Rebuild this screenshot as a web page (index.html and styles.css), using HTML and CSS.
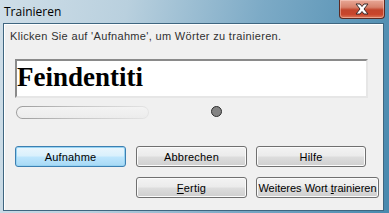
FILE: index.html
```html
<!DOCTYPE html>
<html>
<head>
<meta charset="utf-8">
<link rel="stylesheet" href="styles.css">
</head>
<body>
<div class="window">
  <div class="titlebar">
    <div class="title">Trainieren</div>
    <div class="close">
      <svg width="16" height="12" viewBox="0 0 16 12">
        <path d="M2 1 L6 1 L8 3.5 L10 1 L14 1 L10 6 L14 11 L10 11 L8 8.5 L6 11 L2 11 L6 6 Z" fill="#ffffff" stroke="#3a2a2a" stroke-width="1" stroke-linejoin="round"/>
      </svg>
    </div>
  </div>
  <div class="client">
    <div class="hint">Klicken Sie auf 'Aufnahme', um Wörter zu trainieren.</div>
    <div class="edit">Feindentiti</div>
    <div class="meter-row">
      <div class="progress"><div class="progress-inner"></div></div>
      <div class="dot"></div>
    </div>
    <div class="buttons">
      <button class="btn btn-default">Aufnahme</button>
      <button class="btn btn-mid">Abbrechen</button>
      <button class="btn btn-help">Hilfe</button>
      <button class="btn btn-mid btn-r2c2"><u>F</u>ertig</button>
      <button class="btn btn-wide">Weiteres Wort <u>t</u>rainieren</button>
    </div>
  </div>
</div>
</body>
</html>
```

FILE: styles.css
```css
html, body {
  margin: 0;
  padding: 0;
}
body {
  width: 389px;
  height: 213px;
  overflow: hidden;
  font-family: "Liberation Sans", Arial, sans-serif;
}
.window {
  width: 389px;
  height: 213px;
  box-sizing: border-box;
  display: flex;
  flex-direction: column;
  background: linear-gradient(100deg, #cfdee8 0%, #b9d0de 30%, #7caac6 62%, #4889ae 100%);
}
.titlebar {
  height: 23px;
  display: flex;
  justify-content: space-between;
  align-items: flex-start;
  flex: none;
}
.title {
  padding: 4px 0 0 4px;
  font-family: "Open Sans", "Liberation Sans", sans-serif;
  font-size: 12px;
  line-height: 16px;
  color: #000000;
}
.close {
  width: 46px;
  height: 19px;
  margin-right: 4px;
  box-sizing: border-box;
  border: 1px solid #5b2a22;
  border-top: none;
  border-radius: 0 0 4px 4px;
  background: linear-gradient(#e8a897 0%, #d7826c 40%, #c2452c 55%, #c8452b 80%, #dc7a5a 100%);
  box-shadow: inset 0 0 0 1px rgba(255, 220, 210, 0.45);
  display: flex;
  align-items: center;
  justify-content: center;
}
.client {
  flex: 1;
  margin: 0 5px 2px 3px;
  border: 1px solid #3f6680;
  background: #f0f0f0;
  box-shadow: inset 1px 1px 0 #ffffff;
  padding: 6px 0 0 11px;
  display: flex;
  flex-direction: column;
  align-items: flex-start;
}
.hint {
  margin-left: -5px;
  font-size: 11px;
  line-height: 13px;
  letter-spacing: 0.33px;
  color: #303030;
}
.edit {
  margin-top: 16px;
  width: 353px;
  height: 39px;
  box-sizing: border-box;
  background: #ffffff;
  border-top: 2px solid #8a8a8a;
  border-left: 2px solid #8a8a8a;
  border-right: 2px solid #e6e6e6;
  border-bottom: 2px solid #e6e6e6;
  font-family: "Liberation Serif", "Times New Roman", serif;
  font-weight: bold;
  font-size: 27px;
  line-height: 33px;
  color: #000000;
}
.meter-row {
  margin-top: 8px;
  display: flex;
  align-items: center;
  height: 13px;
  margin-left: 1px;
}
.progress {
  width: 133px;
  height: 13px;
  box-sizing: border-box;
  padding: 1px;
  border-radius: 7px;
  background: linear-gradient(90deg, #9c9c9c 0%, #c4c4c4 45%, #e4e4e4 100%);
}
.progress-inner {
  height: 100%;
  border-radius: 6px;
  background: linear-gradient(#f3f3f3, #ececec);
}
.dot {
  margin-left: 62px;
  margin-top: -2px;
  width: 11px;
  height: 11px;
  box-sizing: border-box;
  border-radius: 50%;
  background: #848484;
  border: 1px solid #2e2e2e;
}
.buttons {
  margin-top: 27px;
  display: grid;
  grid-template-columns: 111px 111px auto;
  grid-template-rows: 21px 21px;
  column-gap: 9px;
  row-gap: 10px;
}
.btn {
  margin: 0;
  box-sizing: border-box;
  height: 21px;
  padding: 0;
  font-family: "Liberation Sans", Arial, sans-serif;
  font-size: 11px;
  letter-spacing: 0.2px;
  color: #000000;
  border: 1px solid #707070;
  border-radius: 3px;
  background: linear-gradient(#f3f3f3 0%, #ebebeb 48%, #dddddd 52%, #cfcfcf 100%);
  box-shadow: inset 0 0 0 1px #fbfbfb;
}
.btn-mid {
  margin-left: 1px;
  width: 111px;
}
.btn-help {
  margin-left: 1px;
  width: 110px;
}
.btn-r2c2 {
  grid-column: 2;
}
.btn-wide {
  margin-left: 1px;
  width: 123px;
  letter-spacing: 0;
}
.btn-default {
  border-color: #3c7fb1;
  background: linear-gradient(#eaf6fd 0%, #d9f0fc 48%, #bee6fd 52%, #a7d9f5 100%);
  box-shadow: inset 0 0 0 1px #97d3f2;
}
u {
  text-decoration: underline;
  text-underline-offset: 1px;
}
```
